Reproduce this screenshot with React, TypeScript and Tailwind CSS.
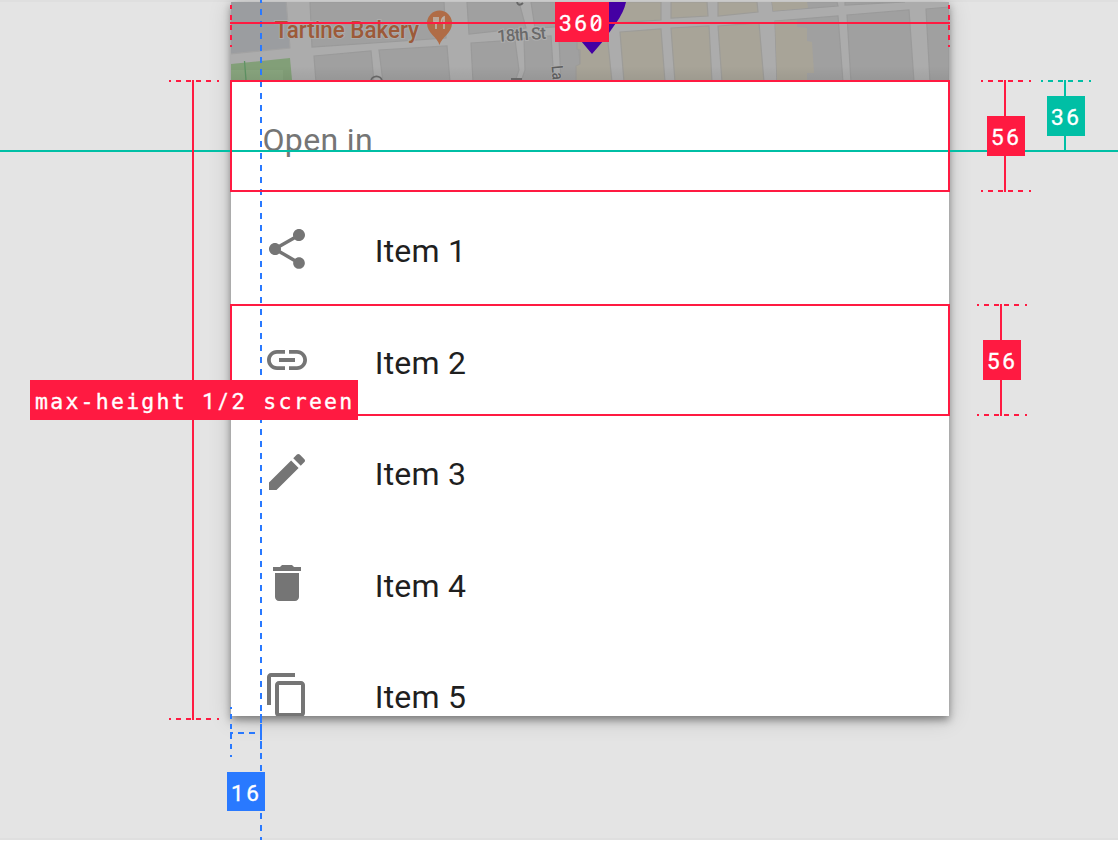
import type { ReactNode } from 'react';

const RED = '#ff1a41';
const TEAL = '#00bfa5';
const BLUE = '#2979ff';

const GREY_BLOCKS = [
  '310,2 444,2 446,38 312,47',
  '314,56 371,51 374,82 316,82',
  '379,50 447,46 450,82 383,82',
  '467,2 519,2 526,28 469,34',
  '471,43 515,40 519,70 515,82 473,82',
  '524,38 551,36 554,82 521,82 525,70',
  '531,2 606,2 607,24 535,28',
  '559,38 577,36 579,50 580,65 576,82 561,82',
  '845,2 905,2 845,5',
  '847,15 909,10 914,82 851,82',
  '775,21 838,16 843,82 777,82',
  '772,2 837,2 838,6 773,11',
  '926,9 949,7 949,82 930,82',
];

const TAN_BLOCKS = [
  '577,36 607,33 612,82 576,82 576,66 580,64 580,50 577,49',
  '612,2 661,2 661,20 613,23',
  '620,32 661,29 665,82 624,82',
  '671,2 707,2 708,16 671,18',
  '671,28 709,26 712,82 675,82',
  '718,2 757,2 758,12 718,16',
  '718,26 759,23 764,82 722,82',
];

function MapStrip() {
  return (
    <svg viewBox="231 2 718 78" className="block h-[78px] w-full shrink-0 font-['Roboto',sans-serif]">
      <defs>
        <linearGradient id="fade" x1="0" y1="0" x2="0" y2="1">
          <stop offset="0" stopColor="#000" stopOpacity="0" />
          <stop offset="1" stopColor="#000" stopOpacity="0.06" />
        </linearGradient>
      </defs>
      <rect x="231" y="2" width="718" height="78" fill="#acacac" />
      <g stroke="#a2a2a2" strokeWidth="1.2">
        <polygon points="229,0 286,0 290,48 229,54" fill="#9b9da0" />
        {GREY_BLOCKS.map((p) => <polygon key={p} points={p} fill="#a0a0a0" stroke="#9a9a9a" />)}
        {TAN_BLOCKS.map((p) => <polygon key={p} points={p} fill="#a8a498" stroke="#9d9c98" />)}
      </g>
      <polygon points="775,21 797,20 797,27 807,28 807,41 812,42 814,73 807,73 807,80 777,80" fill="#a8a498" />
      <polygon points="772,2 807,2 808,8 773,11" fill="#a8a498" />
      <polygon points="231,64 290,58 292,80 231,80" fill="#829f78" />
      <rect x="231" y="70" width="52" height="10" fill="#88a57e" />
      <path d="M244.500 61L246 80" stroke="#5f9464" strokeWidth="1.300" />
      <rect x="231" y="66" width="718" height="14" fill="url(#fade)" />
      <text x="274.500" y="37.500" fontSize="23" fontWeight="500" textLength="144.500" lengthAdjust="spacingAndGlyphs" fill="#9c5a39" stroke="#acacac" strokeWidth="2" paintOrder="stroke">Tartine Bakery</text>
      <path d="M439.500 45C437.500 37 427 33.500 427 23A12.500 12.500 0 0 1 452 23C452 33.500 441.500 37 439.500 45Z" fill="#b06c46" />
      <path d="M434 17V22H438V17M436 17V29M444 29V17C441.500 18 441.500 21 441.500 23H444" fill="none" stroke="#bdb3aa" strokeWidth="1.700" />
      <text transform="translate(497.500 42) rotate(-4)" fontSize="17" fontWeight="500" textLength="49" fill="#6a6a6a" stroke="#b0b0b0" strokeWidth="2" paintOrder="stroke">18th St</text>
      <text transform="translate(551.500 66) rotate(85)" fontSize="16" fontWeight="500" textLength="14" lengthAdjust="spacingAndGlyphs" fill="#5d5d5d" stroke="#b0b0b0" strokeWidth="1" paintOrder="stroke">La</text>
      <path d="M371 82C371 74.500 382 74.500 382 82M511 79H522M517 2C518 6 521 5 523 3" fill="none" stroke="#666" strokeWidth="1.800" />
      <path d="M592 54L581 41Q560 17 558 2H626Q624 12 616 23L604 40Z" fill="#4400a3" />
    </svg>
  );
}

function Icon({ d }: { d: string }) {
  return (
    <svg viewBox="0 0 24 24" className="size-12 shrink-0 fill-[#757575]">
      <path d={d} />
    </svg>
  );
}

const ITEMS = [
  { label: 'Item 1', d: 'M18 16.080c-.76 0-1.440.3-1.960.77L8.910 12.700c.05-.23.09-.46.09-.7s-.04-.47-.09-.7l7.050-4.110c.54.5 1.250.81 2.040.81 1.660 0 3-1.340 3-3s-1.340-3-3-3-3 1.340-3 3c0 .24.04.47.09.7L8.040 9.810C7.500 9.310 6.790 9 6 9c-1.660 0-3 1.340-3 3s1.340 3 3 3c.79 0 1.500-.31 2.040-.81l7.120 4.160c-.05.21-.08.43-.08.65 0 1.610 1.310 2.920 2.920 2.920s2.920-1.310 2.920-2.920-1.310-2.920-2.920-2.920z' },
  { label: 'Item 2', d: 'M3.900 12c0-1.710 1.390-3.100 3.100-3.100h4V7H7c-2.760 0-5 2.240-5 5s2.240 5 5 5h4v-1.900H7c-1.710 0-3.100-1.390-3.100-3.100zM8 13h8v-2H8v2zm9-6h-4v1.900h4c1.710 0 3.100 1.390 3.100 3.100s-1.390 3.100-3.100 3.100h-4V17h4c2.760 0 5-2.240 5-5s-2.240-5-5-5z' },
  { label: 'Item 3', d: 'M3 17.250V21h3.750L17.810 9.940l-3.750-3.750L3 17.250zM20.710 7.040c.39-.39.39-1.020 0-1.410l-2.340-2.340c-.39-.39-1.020-.39-1.410 0l-1.830 1.830 3.750 3.750 1.830-1.830z' },
  { label: 'Item 4', d: 'M6 19c0 1.100.9 2 2 2h8c1.100 0 2-.9 2-2V7H6v12zM19 4h-3.500l-1-1h-5l-1 1H5v2h14V4z' },
  { label: 'Item 5', d: 'M16 1H4c-1.100 0-2 .9-2 2v14h2V3h12V1zm3 4H8c-1.100 0-2 .9-2 2v14c0 1.100.9 2 2 2h11c1.100 0 2-.9 2-2V7c0-1.100-.9-2-2-2zm0 16H8V7h11v14z' },
];

/* Dashed end cap, 50px long and 2px thick */
function Cap({ x, y, color, vertical = false }: { x: number; y: number; color: string; vertical?: boolean }) {
  return (
    <path
      transform={`translate(${x} ${y})${vertical ? ' rotate(90)' : ''}`}
      d="M0 0H2M7 0H12M17 0H22M27 0H32M37 0H42M48 0H50"
      stroke={color}
      strokeWidth="2"
    />
  );
}

function Guides() {
  return (
    <svg viewBox="0 0 1118 844" className="pointer-events-none absolute inset-0 h-[844px] w-[1118px]" fill="none" strokeWidth="2">
      <path d="M261 -3V840" stroke={BLUE} strokeDasharray="6 6" />
      <Cap x={231} y={707} color={BLUE} vertical />
      <Cap x={261} y={707} color={BLUE} vertical />
      <path d="M230 733H233M238 733H244M249 733H255M260 733H262M261 725V740" stroke={BLUE} />
      <Cap x={1041} y={81} color={TEAL} />
      <path d="M1065 80V151M0 151H1118" stroke={TEAL} />
      <g stroke={RED}>
        <path d="M230 23H950M193 80V720M1005 80V192M1001 304V416" />
        <rect x="231" y="81" width="718" height="110" />
        <rect x="231" y="305" width="718" height="110" />
        <path d="M231 5V9M231 15V20M231 25V30M231 35V40M231 45V47M949 5V9M949 15V20M949 25V30M949 35V40M949 45V47" />
      </g>
      <Cap x={169} y={81} color={RED} />
      <Cap x={169} y={719} color={RED} />
      <Cap x={981} y={81} color={RED} />
      <Cap x={981} y={191} color={RED} />
      <Cap x={977} y={305} color={RED} />
      <Cap x={977} y={415} color={RED} />
    </svg>
  );
}

function Tag({ className, children }: { className: string; children: ReactNode }) {
  return (
    <div className={`absolute flex h-10 items-center whitespace-pre pl-1 pt-[3px] font-['Roboto',sans-serif] text-[22.5px] leading-none font-normal text-white [-webkit-text-stroke:0.35px_white] ${className}`}>
      {children}
    </div>
  );
}

export default function App() {
  return (
    <div className="relative h-[844px] w-[1118px] overflow-hidden bg-white font-['Roboto',sans-serif]">
      <main className="flex h-[840px] justify-center border-y-2 border-[#dfdfdf] bg-[#e4e4e4] pl-[62px]">
        <section className="flex h-[714px] w-[718px] shrink-0 flex-col overflow-hidden bg-white shadow-[0_4px_8px_rgba(0,0,0,0.4),0_3px_22px_rgba(0,0,0,0.16)]">
          <MapStrip />
          <header className="flex h-[112px] shrink-0 items-center pt-2 pl-[31.5px] text-[32px] leading-none tracking-[0.35px] text-[#757575]">Open in</header>
          <ul>
            {ITEMS.map((item) => (
              <li key={item.label} className="flex h-[111.5px] items-center pl-[31.7px] pt-0.5">
                <Icon d={item.d} />
                <span className="pt-[4.5px] pl-16 text-[32px] leading-none tracking-[0.25px] text-[#1f1f1f]">{item.label}</span>
              </li>
            ))}
          </ul>
        </section>
      </main>
      <Guides />
      <Tag className="left-[555px] top-[2px] w-[54px] bg-[#ff1a41] tracking-[2.7px]">360</Tag>
      <svg viewBox="0 0 12 18" className="absolute top-[14px] left-[589px] h-[18px] w-3">
        <path d="M3 13.500L9 5.500" stroke="white" strokeWidth="1.800" />
      </svg>
      <Tag className="left-[987px] top-[116px] w-[38px] bg-[#ff1a41] tracking-[2.5px]">56</Tag>
      <Tag className="left-[1047px] top-[96px] w-[38px] bg-[#00bfa5] tracking-[2.5px]">36</Tag>
      <Tag className="left-[983px] top-[340px] w-[38px] bg-[#ff1a41] tracking-[2.5px]">56</Tag>
      <Tag className="left-[227px] top-[772px] h-[39px] w-[38px] bg-[#2979ff] tracking-[2.5px]">16</Tag>
      <Tag className="left-[30px] top-[380px] w-[328px] bg-[#ff1a41] pl-[5px]">
        <span className="font-['DejaVu_Sans_Mono',monospace] text-[21.5px] tracking-[2.250px]">max-height </span>
        <span className="tracking-[3.800px]">1/2</span>
        <span className="font-['DejaVu_Sans_Mono',monospace] text-[21.5px] tracking-[2.250px]"> screen</span>
      </Tag>
    </div>
  );
}
